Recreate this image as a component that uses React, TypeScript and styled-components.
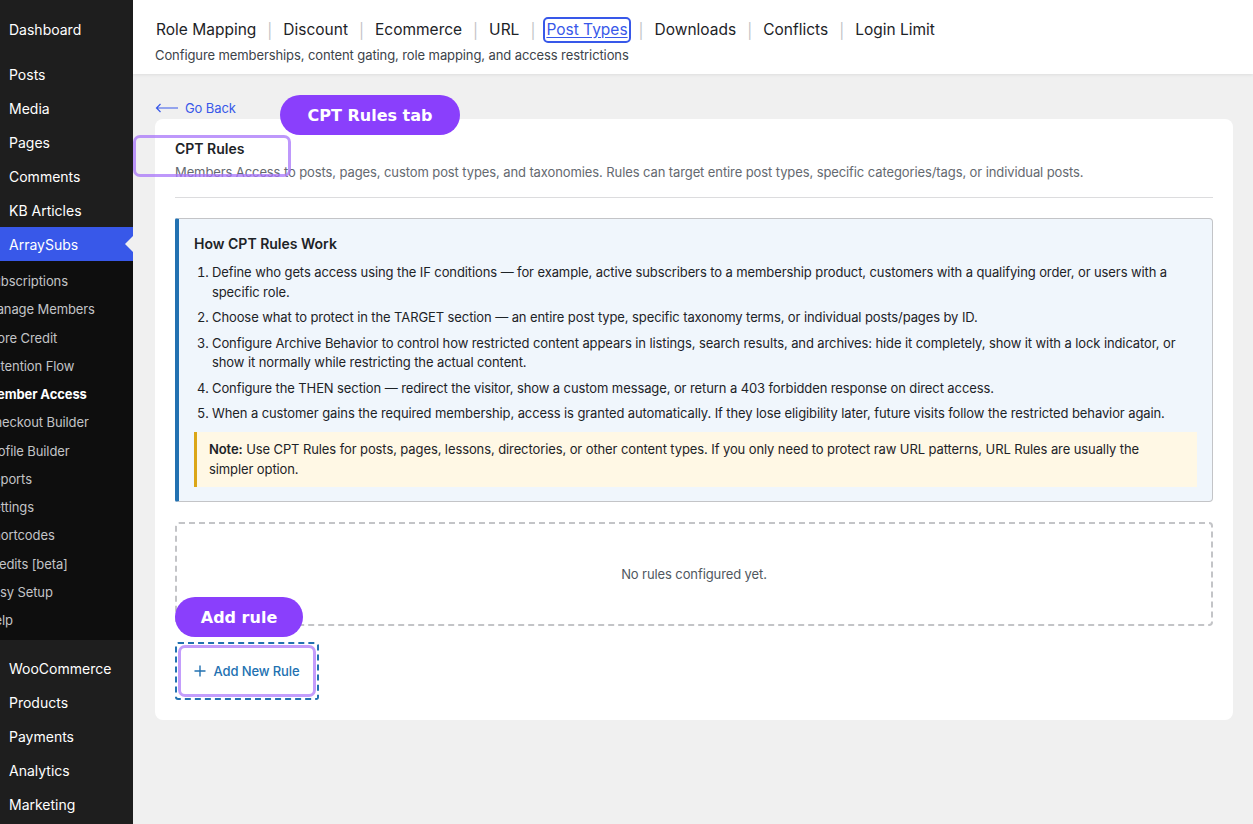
import styled, { createGlobalStyle } from "styled-components";

const GlobalStyle = createGlobalStyle`
  body {
    margin: 0;
    font-family: Inter, "Noto Sans", sans-serif;
    background: #f0f0f0;
    -webkit-font-smoothing: antialiased;
  }
  * { box-sizing: border-box; }
`;

const Shell = styled.div`
  display: flex;
  min-height: 824px;
`;

const Sidebar = styled.nav`
  width: 133px;
  flex-shrink: 0;
  background: #1e1e1e;
  overflow: hidden;
  padding-top: 12px;
`;

const TopItem = styled.div<{ $active?: boolean; $gap?: boolean }>`
  position: relative;
  height: 34px;
  display: flex;
  align-items: center;
  padding-left: 9px;
  margin-top: ${(p) => (p.$gap ? "11px" : "0")};
  font-size: 14px;
  color: #fff;
  background: ${(p) => (p.$active ? "#3858e9" : "transparent")};

  ${(p) =>
    p.$active &&
    `
    &::after {
      content: "";
      position: absolute;
      right: 0;
      top: 9px;
      border: 8px solid transparent;
      border-right-color: #f0f0f0;
      border-left-width: 0;
    }
  `}
`;

const SubMenu = styled.div`
  background: #0e0e0e;
  padding: 6px 0 6px;
`;

const SubItem = styled.div<{ $current?: boolean }>`
  height: 28.25px;
  display: flex;
  align-items: center;
  margin-left: -15px;
  white-space: nowrap;
  font-size: 13px;
  letter-spacing: -0.1px;
  color: ${(p) => (p.$current ? "#fff" : "#c3c4c7")};
  font-weight: ${(p) => (p.$current ? 700 : 400)};
`;

const Main = styled.main`
  position: relative;
  flex: 1;
  min-width: 0;
  background: #f0f0f0;
`;

const Header = styled.header`
  background: #fff;
  padding: 18px 22px 10px;
  box-shadow: 0 1px 3px rgba(0, 0, 0, 0.08);
`;

const Tabs = styled.div`
  display: flex;
  align-items: center;
  height: 24px;
`;

const Tab = styled.span<{ $active?: boolean }>`
  font-size: 15.5px;
  line-height: 20px;
  color: ${(p) => (p.$active ? "#3858e9" : "#1d2327")};
  text-decoration: ${(p) => (p.$active ? "underline" : "none")};
  text-underline-offset: 2px;
  padding: 1px 1px;
  border-radius: 3px;
  outline: ${(p) => (p.$active ? "2px solid #3858e9" : "none")};
`;

const TabSep = styled.span`
  color: #c3c4c7;
  font-size: 15px;
  margin: 0 10px;
`;

const Subtitle = styled.p`
  margin: 4px 0 0;
  font-size: 13px;
  letter-spacing: -0.1px;
  line-height: 18px;
  color: #3c434a;
`;

const Content = styled.div`
  padding: 23px 20px 40px 22px;
`;

const BackLink = styled.a`
  display: inline-flex;
  align-items: center;
  gap: 6px;
  font-size: 13px;
  letter-spacing: -0.1px;
  line-height: 18px;
  color: #3858e9;
  text-decoration: none;
`;

const Card = styled.section`
  margin-top: 2px;
  background: #fff;
  border-radius: 8px;
  padding: 21px 20px 20px;
`;

const CardTitle = styled.h2`
  margin: 0;
  font-size: 14px;
  line-height: 18px;
  font-weight: 600;
  color: #1d2327;
`;

const CardDesc = styled.p`
  margin: 5px 0 0;
  padding-bottom: 16px;
  border-bottom: 1px solid #dcdcde;
  font-size: 13px;
  letter-spacing: -0.1px;
  line-height: 18px;
  color: #646970;
`;

const InfoBox = styled.div`
  margin-top: 20px;
  background: #f0f6fc;
  border: 1px solid #c3c4c7;
  border-left: 4px solid #2271b1;
  border-radius: 2px 4px 4px 2px;
  padding: 16px 15px 14px 15px;
`;

const InfoTitle = styled.h3`
  margin: 0;
  font-size: 14px;
  line-height: 18px;
  font-weight: 600;
  color: #1d2327;
`;

const Steps = styled.ol`
  margin: 10px 0 0;
  padding-left: 18px;

  li {
    font-size: 13px;
    letter-spacing: -0.1px;
    line-height: 19.5px;
    color: #1d2327;
    margin-bottom: 6px;
  }
`;

const Note = styled.div`
  margin-top: 8px;
  background: #fff8e5;
  border-left: 3px solid #dba617;
  padding: 7px 40px 8px 12px;
  font-size: 13px;
  letter-spacing: -0.1px;
  line-height: 20px;
  color: #1d2327;

  strong {
    font-weight: 600;
  }
`;

const EmptyState = styled.div`
  margin-top: 20px;
  height: 104px;
  border: 2px dashed #c3c4c7;
  border-radius: 4px;
  display: flex;
  align-items: center;
  justify-content: center;
  font-size: 13px;
  letter-spacing: -0.1px;
  color: #50575e;
`;

const FocusRing = styled.div`
  display: inline-block;
  margin-top: 16px;
  padding: 1px;
  border: 2px dashed #2271b1;
  border-radius: 3px;
`;

const AddButton = styled.button`
  width: 138px;
  height: 52px;
  display: flex;
  align-items: center;
  justify-content: center;
  gap: 7px;
  background: #fff;
  border: 3px solid #c39dfb;
  border-radius: 7px;
  font-family: inherit;
  font-size: 13px;
  letter-spacing: -0.1px;
  font-weight: 500;
  color: #2271b1;
  cursor: pointer;
`;

const Pill = styled.div<{ $x: number; $y: number; $w: number }>`
  position: absolute;
  left: ${(p) => p.$x}px;
  top: ${(p) => p.$y}px;
  width: ${(p) => p.$w}px;
  height: 40px;
  border-radius: 20px;
  background: #8a3ffc;
  color: #fff;
  font-family: "DejaVu Sans", sans-serif;
  font-weight: 700;
  font-size: 16px;
  display: flex;
  align-items: center;
  justify-content: center;
`;

const Highlight = styled.div`
  position: absolute;
  left: 0;
  top: 135px;
  width: 158px;
  height: 42px;
  border: 3px solid rgba(168, 118, 250, 0.75);
  border-radius: 7px;
`;

const topItems = ["Posts", "Media", "Pages", "Comments", "KB Articles"];
const subItems = [
  "Subscriptions",
  "Manage Members",
  "Store Credit",
  "Retention Flow",
  "Member Access",
  "Checkout Builder",
  "Profile Builder",
  "Reports",
  "Settings",
  "Shortcodes",
  "Credits [beta]",
  "Easy Setup",
  "Help",
];
const wooItems = ["Products", "Payments", "Analytics", "Marketing"];
const tabs = [
  "Role Mapping",
  "Discount",
  "Ecommerce",
  "URL",
  "Post Types",
  "Downloads",
  "Conflicts",
  "Login Limit",
];

const steps = [
  "Define who gets access using the IF conditions — for example, active subscribers to a membership product, customers with a qualifying order, or users with a specific role.",
  "Choose what to protect in the TARGET section — an entire post type, specific taxonomy terms, or individual posts/pages by ID.",
  "Configure Archive Behavior to control how restricted content appears in listings, search results, and archives: hide it completely, show it with a lock indicator, or show it normally while restricting the actual content.",
  "Configure the THEN section — redirect the visitor, show a custom message, or return a 403 forbidden response on direct access.",
  "When a customer gains the required membership, access is granted automatically. If they lose eligibility later, future visits follow the restricted behavior again.",
];

const App = () => {
  return (
    <Shell>
      <GlobalStyle />
      <Sidebar>
        <TopItem>Dashboard</TopItem>
        {topItems.map((item, i) => (
          <TopItem key={item} $gap={i === 0}>
            {item}
          </TopItem>
        ))}
        <TopItem $active>ArraySubs</TopItem>
        <SubMenu>
          {subItems.map((item) => (
            <SubItem key={item} $current={item === "Member Access"}>
              {item}
            </SubItem>
          ))}
        </SubMenu>
        <TopItem $gap>WooCommerce</TopItem>
        {wooItems.map((item) => (
          <TopItem key={item}>{item}</TopItem>
        ))}
      </Sidebar>

      <Main>
        <Header>
          <Tabs>
            {tabs.map((tab, i) => (
              <span key={tab} style={{ display: "contents" }}>
                {i > 0 && <TabSep>|</TabSep>}
                <Tab $active={tab === "Post Types"}>{tab}</Tab>
              </span>
            ))}
          </Tabs>
          <Subtitle>
            Configure memberships, content gating, role mapping, and access restrictions
          </Subtitle>
        </Header>

        <Content>
          <BackLink href="#">
            <svg width="24" height="10" viewBox="0 0 24 10" fill="none">
              <path d="M23 5H1.5M5.5 1L1.5 5l4 4" stroke="#3858e9" strokeWidth="1.2" />
            </svg>
            Go Back
          </BackLink>

          <Card>
            <CardTitle>CPT Rules</CardTitle>
            <CardDesc>
              Members Access to posts, pages, custom post types, and taxonomies. Rules can target
              entire post types, specific categories/tags, or individual posts.
            </CardDesc>

            <InfoBox>
              <InfoTitle>How CPT Rules Work</InfoTitle>
              <Steps>
                {steps.map((s, i) => (
                  <li key={i}>{s}</li>
                ))}
              </Steps>
              <Note>
                <strong>Note:</strong> Use CPT Rules for posts, pages, lessons, directories, or
                other content types. If you only need to protect raw URL patterns, URL Rules are
                usually the simpler option.
              </Note>
            </InfoBox>

            <EmptyState>No rules configured yet.</EmptyState>

            <FocusRing>
              <AddButton>
                <svg width="12" height="12" viewBox="0 0 12 12">
                  <path d="M6 0.5v11M0.5 6h11" stroke="#2271b1" strokeWidth="1.4" />
                </svg>
                Add New Rule
              </AddButton>
            </FocusRing>
          </Card>
        </Content>

        <Highlight />
        <Pill $x={147} $y={95} $w={180}>
          CPT Rules tab
        </Pill>
        <Pill $x={42} $y={597} $w={128}>
          Add rule
        </Pill>
      </Main>
    </Shell>
  );
};

export default App;
